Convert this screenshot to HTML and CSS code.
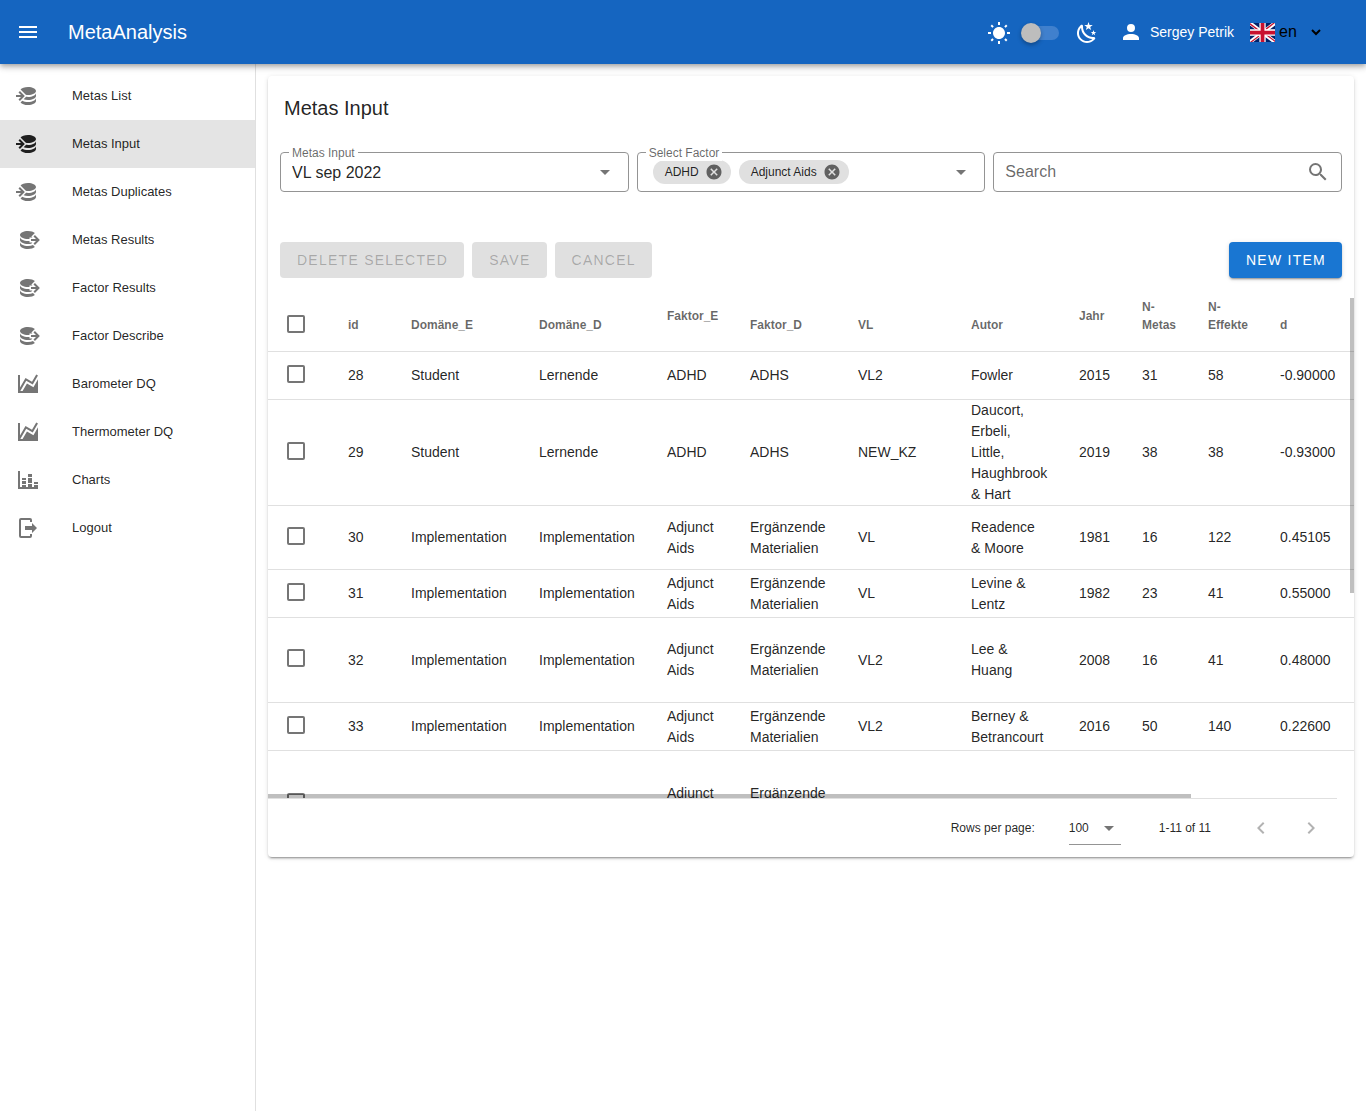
FILE: index.html
```html
<!DOCTYPE html>
<html lang="en">
<head>
<meta charset="utf-8">
<meta name="viewport" content="width=device-width, initial-scale=1">
<title>MetaAnalysis</title>
<link rel="stylesheet" href="styles.css">
</head>
<body>
<svg class="sprite" aria-hidden="true">
  <symbol id="db-import" viewBox="0 0 24 24"><path d="M12,3C8.59,3 5.69,4.07 4.54,5.57L9.79,10.82C10.5,10.93 11.22,11 12,11C16.42,11 20,9.21 20,7C20,4.79 16.42,3 12,3M3.92,7.08L2.5,8.5L5,11H0V13H5L2.5,15.5L3.92,16.92L8.84,12M20,9C20,11.21 16.42,13 12,13C11.34,13 10.7,12.95 10.09,12.87L7.62,15.34C8.88,15.75 10.38,16 12,16C16.42,16 20,14.21 20,12M20,14C20,16.21 16.42,18 12,18C9.72,18 7.67,17.5 6.21,16.75L4.53,18.43C5.68,19.93 8.59,21 12,21C16.42,21 20,19.21 20,17"/></symbol>
  <symbol id="db-export" viewBox="0 0 24 24"><path d="M12,3C7.58,3 4,4.79 4,7C4,9.21 7.58,11 12,11C12.5,11 13,10.97 13.5,10.92V9.5H16.39L15.39,8.5L18.9,5C17.5,3.8 14.94,3 12,3M18.92,7.08L17.5,8.5L20,11H15V13H20L17.5,15.5L18.92,16.92L23.84,12M4,9V12C4,14.21 7.58,16 12,16C13.17,16 14.26,15.85 15.25,15.63L16.38,14.5H13.5V12.92C13,12.97 12.5,13 12,13C7.58,13 4,11.21 4,9M4,14V17C4,19.21 7.58,21 12,21C14.94,21 17.5,20.2 18.9,19L17,17.1C15.61,17.66 13.9,18 12,18C7.58,18 4,16.21 4,14Z"/></symbol>
  <symbol id="area" viewBox="0 0 24 24"><path d="M17.45,15.18L22,7.31V19L22,21H2V3H4V15.54L9.5,6L16,9.78L20.24,2.45L21.97,3.45L16.74,12.5L10.23,8.75L4.31,19H6.57L10.96,11.44L17.45,15.18Z"/></symbol>
  <symbol id="bars" viewBox="0 0 24 24"><path d="M22,21H2V3H4V19H6V17H10V19H12V16H16V19H18V17H22V21M18,14H22V16H18V14M12,6H16V9H12V6M16,15H12V10H16V15M6,10H10V12H6V10M10,16H6V13H10V16Z"/></symbol>
  <symbol id="logout" viewBox="0 0 24 24"><path d="M16,17V14H9V10H16V7L21,12L16,17M14,2A2,2 0 0,1 16,4V6H14V4H5V20H14V18H16V20A2,2 0 0,1 14,22H5A2,2 0 0,1 3,20V4A2,2 0 0,1 5,2H14Z"/></symbol>
  <symbol id="caret" viewBox="0 0 24 24"><path d="M7,10L12,15L17,10H7Z"/></symbol>
  <symbol id="remove" viewBox="0 0 24 24"><path d="M12,2C17.53,2 22,6.47 22,12C22,17.53 17.53,22 12,22C6.47,22 2,17.53 2,12C2,6.47 6.47,2 12,2M15.59,7L12,10.59L8.41,7L7,8.41L10.59,12L7,15.59L8.41,17L12,13.41L15.59,17L17,15.59L13.41,12L17,8.41L15.59,7Z"/></symbol>
</svg>

<header class="topbar">
  <button class="icon-btn" type="button" aria-label="Menu"><svg class="icon" viewBox="0 0 24 24"><path d="M3,6H21V8H3V6M3,11H21V13H3V11M3,16H21V18H3V16Z"/></svg></button>
  <h1 class="brand">MetaAnalysis</h1>
  <div class="theme">
    <svg class="icon" viewBox="0 0 24 24"><path d="M3.55 19.09L4.96 20.5L6.76 18.71L5.34 17.29M12 6C8.69 6 6 8.69 6 12S8.69 18 12 18 18 15.31 18 12C18 8.68 15.31 6 12 6M20 13H23V11H20M17.24 18.71L19.04 20.5L20.45 19.09L18.66 17.29M20.45 5L19.04 3.6L17.24 5.39L18.66 6.81M13 1H11V4H13M6.76 5.39L4.96 3.6L3.55 5L5.34 6.81L6.76 5.39M1 13H4V11H1M13 20H11V23H13"/></svg>
    <input class="switch" type="checkbox" role="switch" aria-label="Dark theme">
    <svg class="icon" viewBox="0 0 24 24"><path d="M17.75,4.09L15.22,6.03L16.13,9.09L13.5,7.28L10.87,9.09L11.78,6.03L9.25,4.09L12.44,4L13.5,1L14.56,4L17.75,4.09M21.25,11L19.61,12.25L20.2,14.23L18.5,13.06L16.8,14.23L17.39,12.25L15.75,11L17.81,10.95L18.5,9L19.19,10.95L21.25,11M18.97,15.95C19.8,15.87 20.69,17.05 20.16,17.8C19.84,18.25 19.5,18.67 19.08,19.07C15.17,23 8.84,23 4.94,19.07C1.03,15.17 1.03,8.83 4.94,4.93C5.34,4.53 5.76,4.17 6.21,3.85C6.96,3.32 8.14,4.21 8.06,5.04C7.79,7.9 8.75,10.87 10.95,13.06C13.14,15.26 16.1,16.22 18.97,15.95M17.33,17.97C14.5,17.81 11.7,16.64 9.53,14.5C7.36,12.31 6.2,9.5 6.04,6.68C3.23,9.82 3.34,14.64 6.35,17.66C9.37,20.67 14.19,20.78 17.33,17.97Z"/></svg>
  </div>
  <a class="user" href="#"><svg class="icon" viewBox="0 0 24 24"><path d="M12,4A4,4 0 0,1 16,8A4,4 0 0,1 12,12A4,4 0 0,1 8,8A4,4 0 0,1 12,4M12,14C16.42,14 20,15.79 20,18V20H4V18C4,15.79 7.58,14 12,14Z"/></svg><span>Sergey Petrik</span></a>
  <div class="lang">
    <svg class="flag" viewBox="0 0 640 480" preserveAspectRatio="none"><path fill="#012169" d="M0 0h640v480H0z"/><path fill="#fff" d="m75 0 244 181L562 0h78v62L400 241l240 178v61h-80L320 301 81 480H0v-60l239-178L0 64V0z"/><path fill="#c8102e" d="m424 281 216 159v40L369 281zm-184 20 6 35L54 480H0zM640 0v3L391 191l2-44L590 0zM0 0l239 176h-60L0 42z"/><path fill="#fff" d="M241 0v480h160V0zM0 160v160h640V160z"/><path fill="#c8102e" d="M0 193v96h640v-96zM273 0v480h96V0z"/></svg>
    <select class="lang-select" aria-label="Language"><option>en</option></select>
    <svg class="lang-caret" viewBox="0 0 10 8"><path d="M1 2L5 6L9 2"/></svg>
  </div>
</header>

<div class="layout">
  <nav class="sidebar">
    <a class="nav-item" href="#"><svg class="icon"><use href="#db-import"/></svg><span>Metas List</span></a>
    <a class="nav-item active" href="#" aria-current="page"><svg class="icon"><use href="#db-import"/></svg><span>Metas Input</span></a>
    <a class="nav-item" href="#"><svg class="icon"><use href="#db-import"/></svg><span>Metas Duplicates</span></a>
    <a class="nav-item" href="#"><svg class="icon"><use href="#db-export"/></svg><span>Metas Results</span></a>
    <a class="nav-item" href="#"><svg class="icon"><use href="#db-export"/></svg><span>Factor Results</span></a>
    <a class="nav-item" href="#"><svg class="icon"><use href="#db-export"/></svg><span>Factor Describe</span></a>
    <a class="nav-item" href="#"><svg class="icon"><use href="#area"/></svg><span>Barometer DQ</span></a>
    <a class="nav-item" href="#"><svg class="icon"><use href="#area"/></svg><span>Thermometer DQ</span></a>
    <a class="nav-item" href="#"><svg class="icon"><use href="#bars"/></svg><span>Charts</span></a>
    <a class="nav-item" href="#"><svg class="icon"><use href="#logout"/></svg><span>Logout</span></a>
  </nav>

  <main class="content">
    <section class="card">
      <h2 class="card-title">Metas Input</h2>
      <div class="filters">
        <div class="field">
          <label class="field-label" for="meta">Metas Input</label>
          <select class="field-control" id="meta"><option>VL sep 2022</option></select>
          <svg class="icon field-icon"><use href="#caret"/></svg>
        </div>
        <div class="field chips" role="group" aria-labelledby="factor-label">
          <span class="field-label" id="factor-label">Select Factor</span>
          <span class="chip">ADHD<button type="button" aria-label="Remove ADHD"><svg><use href="#remove"/></svg></button></span>
          <span class="chip">Adjunct Aids<button type="button" aria-label="Remove Adjunct Aids"><svg><use href="#remove"/></svg></button></span>
          <button class="icon-btn open" type="button" aria-label="Open"><svg class="icon"><use href="#caret"/></svg></button>
        </div>
        <div class="field">
          <input class="field-control" type="text" placeholder="Search" aria-label="Search">
          <svg class="icon field-icon" viewBox="0 0 24 24"><path d="M9.5,3A6.5,6.5 0 0,1 16,9.5C16,11.11 15.41,12.59 14.44,13.73L14.71,14H15.5L20.5,19L19,20.5L14,15.5V14.71L13.73,14.44C12.59,15.41 11.11,16 9.5,16A6.5,6.5 0 0,1 3,9.5A6.5,6.5 0 0,1 9.5,3M9.5,5C7,5 5,7 5,9.5C5,12 7,14 9.5,14C12,14 14,12 14,9.5C14,7 12,5 9.5,5Z"/></svg>
        </div>
      </div>
      <div class="actions">
        <button class="btn" type="button" disabled>DELETE SELECTED</button>
        <button class="btn" type="button" disabled>SAVE</button>
        <button class="btn" type="button" disabled>CANCEL</button>
        <button class="btn primary" type="button">NEW ITEM</button>
      </div>
      <div class="table-wrap">
        <table class="grid">
          <colgroup><col class="c-check"><col class="c-id"><col class="c-domain"><col class="c-domain"><col class="c-fe"><col class="c-fd"><col class="c-vl"><col class="c-autor"><col class="c-jahr"><col class="c-metas"><col class="c-effekte"><col></colgroup>
          <thead>
            <tr>
              <th><input type="checkbox" aria-label="Select all"></th>
              <th>id<i class="sort"></i></th><th>Domäne_E<i class="sort"></i></th><th>Domäne_D<i class="sort"></i></th><th>Faktor_E<i class="sort"></i></th><th>Faktor_D<i class="sort"></i></th><th>VL<i class="sort"></i></th><th>Autor<i class="sort"></i></th><th>Jahr<i class="sort"></i></th><th>N-Metas<i class="sort"></i></th><th>N-Effekte<i class="sort"></i></th><th>d<i class="sort"></i></th>
            </tr>
          </thead>
          <tbody>
            <tr><td><input type="checkbox" aria-label="Select 28"></td><td>28</td><td>Student</td><td>Lernende</td><td>ADHD</td><td>ADHS</td><td>VL2</td><td>Fowler</td><td>2015</td><td>31</td><td>58</td><td>-0.90000</td></tr>
            <tr><td><input type="checkbox" aria-label="Select 29"></td><td>29</td><td>Student</td><td>Lernende</td><td>ADHD</td><td>ADHS</td><td>NEW_KZ</td><td>Daucort, Erbeli, Little, Haughbrook &amp; Hart</td><td>2019</td><td>38</td><td>38</td><td>-0.93000</td></tr>
            <tr class="lines-3"><td><input type="checkbox" aria-label="Select 30"></td><td>30</td><td>Implementation</td><td>Implementation</td><td>Adjunct Aids</td><td>Ergänzende Materialien</td><td>VL</td><td>Readence &amp; Moore</td><td>1981</td><td>16</td><td>122</td><td>0.45105</td></tr>
            <tr><td><input type="checkbox" aria-label="Select 31"></td><td>31</td><td>Implementation</td><td>Implementation</td><td>Adjunct Aids</td><td>Ergänzende Materialien</td><td>VL</td><td>Levine &amp; Lentz</td><td>1982</td><td>23</td><td>41</td><td>0.55000</td></tr>
            <tr class="lines-4"><td><input type="checkbox" aria-label="Select 32"></td><td>32</td><td>Implementation</td><td>Implementation</td><td>Adjunct Aids</td><td>Ergänzende Materialien</td><td>VL2</td><td>Lee &amp; Huang</td><td>2008</td><td>16</td><td>41</td><td>0.48000</td></tr>
            <tr><td><input type="checkbox" aria-label="Select 33"></td><td>33</td><td>Implementation</td><td>Implementation</td><td>Adjunct Aids</td><td>Ergänzende Materialien</td><td>VL2</td><td>Berney &amp; Betrancourt</td><td>2016</td><td>50</td><td>140</td><td>0.22600</td></tr>
            <tr class="lines-5"><td><input type="checkbox" aria-label="Select row"></td><td></td><td></td><td></td><td>Adjunct Aids</td><td>Ergänzende Materialien</td><td></td><td></td><td></td><td></td><td></td><td></td></tr>
          </tbody>
        </table>
        <span class="thumb-y"></span>
        <span class="thumb-x"></span>
      </div>
      <footer class="pager">
        <label for="rows">Rows per page:</label>
        <span class="rows">
          <select id="rows"><option>100</option></select>
          <svg class="icon"><use href="#caret"/></svg>
        </span>
        <span class="range">1-11 of 11</span>
        <button class="icon-btn" type="button" aria-label="Previous page" disabled><svg class="icon" viewBox="0 0 24 24"><path d="M15.41,16.58L10.83,12L15.41,7.41L14,6L8,12L14,18L15.41,16.58Z"/></svg></button>
        <button class="icon-btn" type="button" aria-label="Next page" disabled><svg class="icon" viewBox="0 0 24 24"><path d="M8.59,16.58L13.17,12L8.59,7.41L10,6L16,12L10,18L8.59,16.58Z"/></svg></button>
      </footer>
    </section>
  </main>
</div>
</body>
</html>
```
FILE: styles.css
```css
* { box-sizing: border-box; }

body {
  margin: 0;
  min-height: 100vh;
  display: flex;
  flex-direction: column;
  background: #fff;
  color: rgba(0, 0, 0, 0.87);
  font-family: "Liberation Sans", Arial, sans-serif;
  font-size: 14px;
}

button, select, input { font: inherit; color: inherit; margin: 0; }
a { color: inherit; text-decoration: none; }
.sprite { position: absolute; width: 0; height: 0; }
.icon { width: 24px; height: 24px; fill: currentColor; flex: none; display: block; }

.icon-btn {
  display: flex;
  align-items: center;
  justify-content: center;
  padding: 0;
  border: 0;
  background: none;
}

/* Top bar */
.topbar {
  position: relative;
  z-index: 2;
  height: 64px;
  display: flex;
  align-items: center;
  padding: 0 45px 0 16px;
  background: #1565c0;
  color: #fff;
  box-shadow: 0 2px 4px -1px rgba(0, 0, 0, 0.2), 0 4px 5px rgba(0, 0, 0, 0.14), 0 1px 10px rgba(0, 0, 0, 0.12);
}
.brand { margin: 0 auto 0 28px; font-size: 20px; font-weight: 500; line-height: 24px; }
.theme { display: flex; align-items: center; gap: 12px; padding-top: 2px; }
.theme .icon:last-child { margin-left: 4px; }
.switch {
  appearance: none;
  width: 36px;
  height: 14px;
  border-radius: 7px;
  background: #4080cd;
  display: flex;
  align-items: center;
}
.switch::before {
  content: "";
  width: 20px;
  height: 20px;
  margin-left: -2px;
  flex: none;
  border-radius: 50%;
  background: #bdbdbd;
  box-shadow: 0 2px 4px rgba(0, 0, 0, 0.3);
}
.user { display: flex; align-items: center; gap: 7px; margin-left: 20px; font-weight: 500; }
.lang { display: flex; align-items: center; margin-left: 16px; color: #000; }
.flag { width: 25px; height: 19px; }
.lang-select {
  appearance: none;
  width: 52px;
  margin-right: -16px;
  padding: 0 0 0 4px;
  border: 0;
  background: none;
  font-size: 16px;
  line-height: 20px;
}
.lang-caret { width: 10px; height: 8px; fill: none; stroke: #000; stroke-width: 2; pointer-events: none; }

/* Side navigation */
.layout { flex: 1; display: flex; }
.sidebar {
  width: 256px;
  flex: none;
  padding-top: 8px;
  border-right: 1px solid #e0e0e0;
}
.nav-item {
  display: flex;
  align-items: center;
  gap: 32px;
  height: 48px;
  padding: 0 16px;
  font-size: 13px;
  line-height: 20px;
}
.nav-item .icon { color: #757575; }
.nav-item.active { background: #e4e4e4; }
.nav-item.active .icon { color: #1f1f1f; }

/* Card */
.content { flex: 1; min-width: 0; padding: 12px; }
.card {
  border-radius: 4px;
  background: #fff;
  box-shadow: 0 3px 1px -2px rgba(0, 0, 0, 0.2), 0 2px 2px rgba(0, 0, 0, 0.14), 0 1px 5px rgba(0, 0, 0, 0.12);
}
.card-title { margin: 0; padding: 16px; font-size: 20px; font-weight: 500; line-height: 32px; }

.filters { display: grid; grid-template-columns: repeat(3, 1fr); gap: 8px; padding: 12px 12px 0; }
.field {
  position: relative;
  display: flex;
  align-items: center;
  height: 40px;
  border: 1px solid #949494;
  border-radius: 4px;
}
.field-label {
  position: absolute;
  top: -8px;
  left: 8px;
  padding: 0 3px;
  background: #fff;
  color: rgba(0, 0, 0, 0.6);
  font-size: 12px;
  line-height: 16px;
}
.field-control {
  appearance: none;
  width: 100%;
  height: 38px;
  padding: 0 40px 0 11px;
  border: 0;
  background: none;
  font-size: 16px;
}
.field-control::placeholder { color: rgba(0, 0, 0, 0.6); opacity: 1; }
.field-icon { margin-left: -35px; margin-right: 11px; color: #757575; pointer-events: none; }
.chips { gap: 8px; padding: 0 11px 0 15px; }
.open { margin-left: auto; color: #757575; }
.chip {
  display: flex;
  align-items: center;
  gap: 6px;
  height: 24px;
  padding: 0 8px 0 12px;
  border-radius: 12px;
  background: #e0e0e0;
  font-size: 12px;
}
.chip button { display: flex; padding: 0; border: 0; background: none; }
.chip svg { width: 18px; height: 18px; fill: #616161; }

.actions { display: flex; gap: 8px; padding: 50px 12px 20px; }
.btn {
  height: 36px;
  padding: 0 16px 0 17px;
  border: 0;
  border-radius: 4px;
  background: #e0e0e0;
  color: rgba(0, 0, 0, 0.26);
  font-size: 14px;
  font-weight: 500;
  letter-spacing: 0.09em;
}
.btn.primary {
  margin-left: auto;
  background: #1976d2;
  color: #fff;
  box-shadow: 0 3px 1px -2px rgba(0, 0, 0, 0.2), 0 2px 2px rgba(0, 0, 0, 0.14), 0 1px 5px rgba(0, 0, 0, 0.12);
}

/* Data table */
.table-wrap { position: relative; height: 500px; overflow: hidden; }
.grid { width: 100%; min-width: 1282px; table-layout: fixed; border-collapse: separate; border-spacing: 0; }
.c-check { width: 64px; }
.c-id { width: 63px; }
.c-domain { width: 128px; }
.c-fe { width: 83px; }
.c-fd { width: 108px; }
.c-vl { width: 113px; }
.c-autor { width: 108px; }
.c-jahr { width: 63px; }
.c-metas { width: 66px; }
.c-effekte { width: 72px; }
.grid th {
  height: 54px;
  padding: 0 16px;
  box-shadow: inset 0 -1px #e0e0e0;
  color: rgba(0, 0, 0, 0.6);
  font-size: 12px;
  font-weight: 700;
  line-height: 18px;
  text-align: left;
}
.grid td {
  height: 48px;
  padding: 0 16px;
  border-bottom: 1px solid #e0e0e0;
  line-height: 21px;
}
.lines-3 td { height: 64px; }
.lines-4 td { height: 85px; }
.lines-5 td { height: 106px; }
.sort { display: inline-block; width: 18px; height: 18px; vertical-align: top; }
.grid input {
  appearance: none;
  display: block;
  width: 18px;
  height: 18px;
  margin: 0 3px 2px;
  border: 2px solid #757575;
  border-radius: 2px;
}
.grid td input { margin-bottom: 4px; }
.thumb-y, .thumb-x { position: absolute; background: rgba(0, 0, 0, 0.25); }
.thumb-y { top: 0; right: 0; width: 4px; height: 59%; }
.thumb-x { bottom: 0; left: 0; height: 4px; width: 85%; }

/* Pager */
.pager {
  display: flex;
  align-items: center;
  justify-content: flex-end;
  height: 59px;
  margin-right: 17px;
  padding-right: 8px;
  border-top: 1px solid #e0e0e0;
  font-size: 12px;
}
.rows { display: flex; align-items: center; margin: 0 38px 0 34px; height: 34px; border-bottom: 1px solid #949494; }
.rows select { appearance: none; width: 52px; height: 33px; padding: 0; border: 0; background: none; }
.rows .icon { margin-left: -24px; color: #757575; pointer-events: none; }
.pager .icon-btn { width: 36px; height: 36px; color: rgba(0, 0, 0, 0.3); }
.range { margin-right: 32px; }
.pager .icon-btn + .icon-btn { margin-left: 14px; }
```
